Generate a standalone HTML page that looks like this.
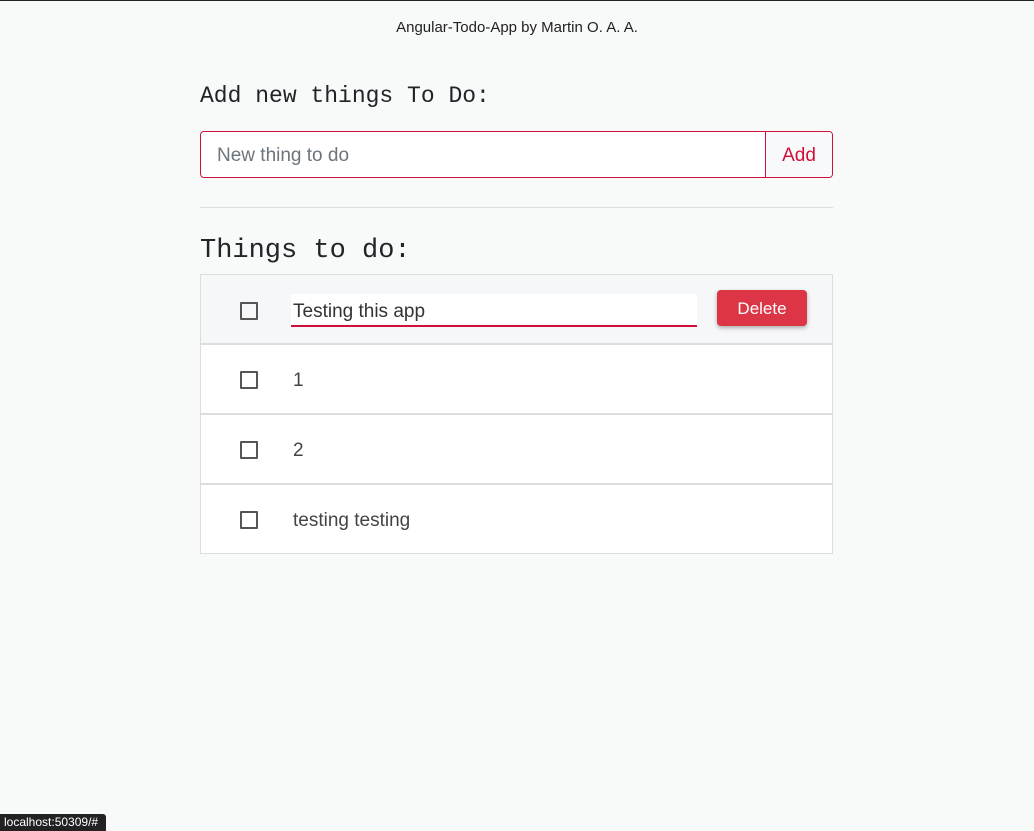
<!DOCTYPE html>
<html><head><style>
body{margin:0;width:1034px;height:831px;background:#f8f9f9;font-family:"Liberation Sans",sans-serif;position:relative;overflow:hidden;border-top:1px solid #222;box-sizing:border-box}
.t{position:absolute;top:18px;left:0;width:1034px;text-align:center;font-size:15px;color:#222}
.h{position:absolute;left:200px;font-family:"Liberation Mono",monospace;color:#212529}
.in{position:absolute;left:200px;top:130px;width:631px;height:45px;border:1px solid #d0103a;border-radius:4px;background:#fff;overflow:hidden}
.in span{position:absolute;left:16px;top:13px;font-size:19px;color:#6c757d}
.in b{position:absolute;right:0;top:0;width:66px;height:45px;border-left:1px solid #d0103a;background:#f8f9fa;color:#d0103a;font-weight:normal;font-size:19px;text-align:center;line-height:47px}
hr{position:absolute;left:200px;top:206px;width:633px;margin:0;border:0;border-top:1px solid #ddd}
.row{position:absolute;left:200px;width:631px;height:68px;border:1px solid #ddd;background:#fff}
.cb{position:absolute;left:39px;top:26px;width:18px;height:18px;border:2px solid #555;box-sizing:border-box;border-radius:1px}
.tx{position:absolute;left:92px;top:25px;font-size:19px;color:#444}
</style></head><body>
<div class="t">Angular-Todo-App by Martin O. A. A.</div>
<div class="h" style="top:82px;font-size:23px">Add new things To Do:</div>
<div class="in"><span>New thing to do</span><b>Add</b></div>
<hr>
<div class="h" style="top:235px;font-size:27px">Things to do:</div>
<div class="row" style="top:273px;background:#f6f7f8">
<div class="cb" style="top:27px"></div>
<div style="position:absolute;left:90px;top:19px;width:406px;height:31px;background:#fff;border-bottom:2px solid #d0103a"></div>
<div class="tx" style="top:26px;color:#333">Testing this app</div>
<div style="position:absolute;left:516px;top:15px;width:90px;height:36px;background:#dc3545;border-radius:4px;box-shadow:0 2px 4px rgba(0,0,0,.3);color:#fff;font-size:17px;text-align:center;line-height:38px">Delete</div>
</div>
<div class="row" style="top:343px"><div class="cb"></div><div class="tx">1</div></div>
<div class="row" style="top:413px"><div class="cb"></div><div class="tx">2</div></div>
<div class="row" style="top:483px"><div class="cb"></div><div class="tx">testing testing</div></div>
<div style="position:absolute;left:0;top:813px;height:17px;width:98px;padding:0 4px;background:#222;color:#fff;font-size:12px;line-height:17px;border-radius:0 3px 0 0">localhost:50309/#</div>
</body></html>
